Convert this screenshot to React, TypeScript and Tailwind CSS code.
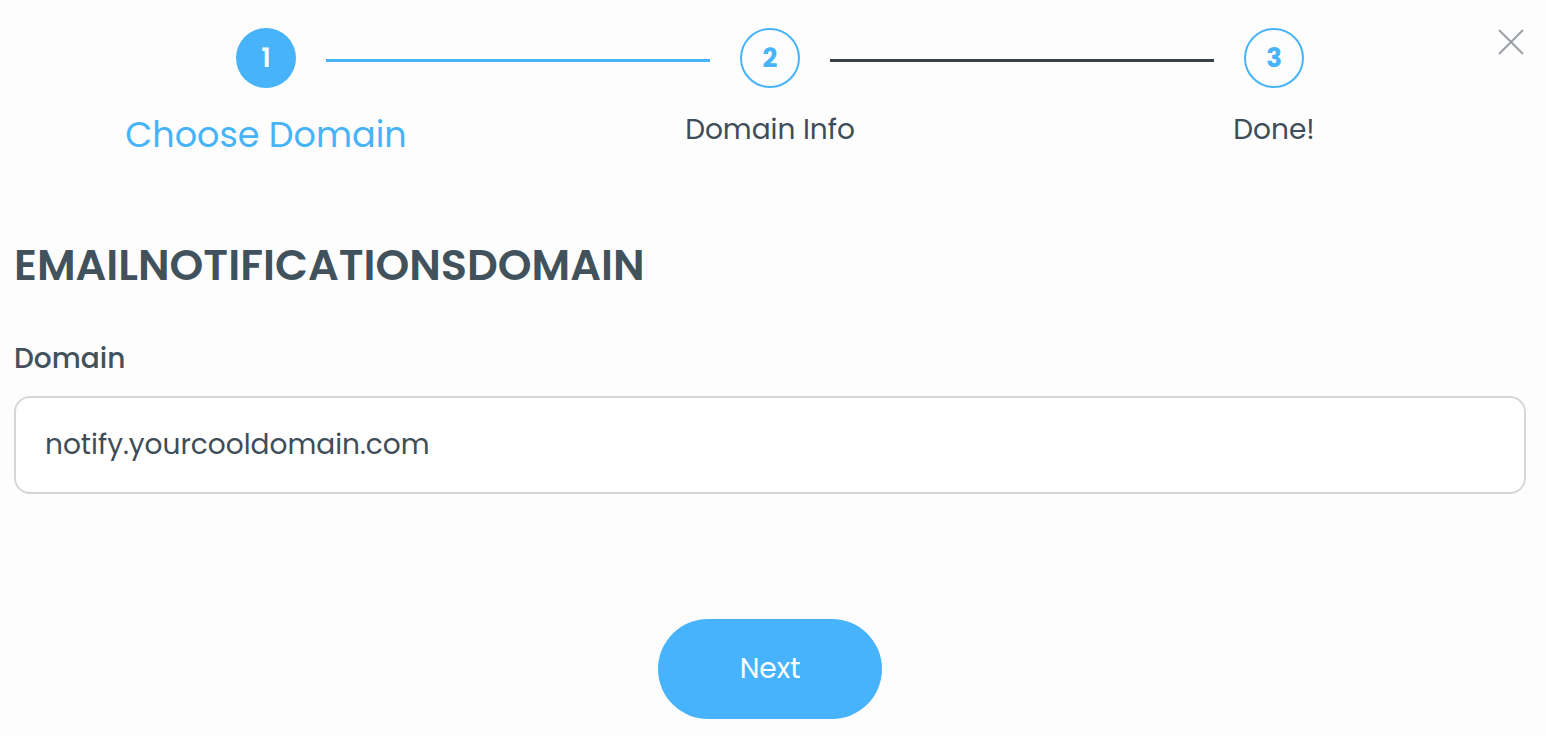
import React from "react";

const font = { fontFamily: '"Poppins", "Open Sans", "Noto Sans", sans-serif' };

function Step({
  n,
  label,
  active,
  left,
  right,
}: {
  n: number;
  label: string;
  active?: boolean;
  left?: string;
  right?: string;
}) {
  return (
    <div className="flex flex-col items-center">
      <div className="flex w-full items-center">
        <div className="flex-1 pr-[30px]">
          {left ? <div className={`mt-[4px] h-[3px] w-full ${left}`} /> : null}
        </div>
        {active ? (
          <div className="flex h-[60px] w-[60px] items-center justify-center rounded-full bg-[#47b3f8] text-[26px] font-semibold text-white">
            {n}
          </div>
        ) : (
          <div className="flex h-[60px] w-[60px] items-center justify-center rounded-full border-2 border-[#47b3f8] text-[26px] font-bold text-[#47b3f8]">
            {n}
          </div>
        )}
        <div className="flex-1 pl-[30px]">
          {right ? <div className={`mt-[4px] h-[3px] w-full ${right}`} /> : null}
        </div>
      </div>
      {active ? (
        <div className="mt-[25px] text-[35px] leading-[44px] text-[#47b3f8]">{label}</div>
      ) : (
        <div className="mt-[24px] text-[28px] leading-[36px] text-[#3e4d58]">{label}</div>
      )}
    </div>
  );
}

export default function App() {
  return (
    <div className="relative min-h-screen bg-[#fdfdfe] pl-[14px] pr-[20px] pt-[28px]" style={font}>
      <button className="absolute right-[22px] top-[29px] text-[#9aa0a6]" aria-label="close">
        <svg width="26" height="26" viewBox="0 0 26 26" fill="none" stroke="currentColor" strokeWidth="2">
          <path d="M1 1 L25 25 M25 1 L1 25" />
        </svg>
      </button>
      <div className="grid grid-cols-3 items-start">
        <Step n={1} label="Choose Domain" active right="bg-[#47b3f8]" />
        <Step n={2} label="Domain Info" left="bg-[#47b3f8]" right="bg-[#36414a]" />
        <Step n={3} label="Done!" left="bg-[#36414a]" />
      </div>
      <h1 className="mt-[82px] text-[43px] font-semibold leading-[52px] text-[#42525d]">
        EMAILNOTIFICATIONSDOMAIN
      </h1>
      <div className="mt-[50px] text-[28px] font-medium leading-[36px] text-[#42525d]">Domain</div>
      <div className="mt-[19px] flex h-[98px] items-center rounded-[16px] border-2 border-[#d4d7da] bg-white px-[29px]">
        <span className="text-[28px] text-[#3e4d58]">notify.yourcooldomain.com</span>
      </div>
      <div className="mt-[125px] flex justify-center">
        <button className="flex h-[100px] w-[224px] items-center justify-center rounded-full bg-[#47b3fd] text-[28px] text-white">
          Next
        </button>
      </div>
    </div>
  );
}
